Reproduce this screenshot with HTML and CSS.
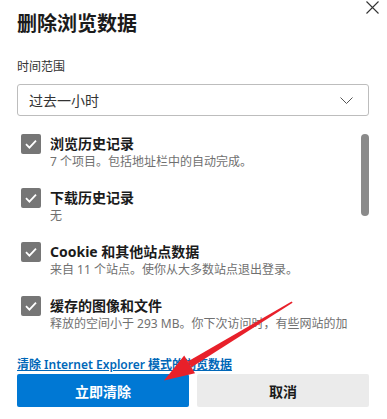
FILE: index.html
```html
<!DOCTYPE html>
<html lang="zh-CN">
<head>
<meta charset="utf-8">
<title>删除浏览数据</title>
<link rel="stylesheet" href="styles.css">
</head>
<body>
<div class="dialog">
  <div class="header">
    <h1 class="title">删除浏览数据</h1>
    <button class="close" aria-label="关闭">
      <svg width="13" height="13" viewBox="0 0 13 13"><path d="M0.5 0.5 L12.5 12.5 M12.5 0.5 L0.5 12.5" stroke="#333" stroke-width="1.1" fill="none"/></svg>
    </button>
  </div>
  <div class="label">时间范围</div>
  <div class="select">
    <span class="select-text">过去一小时</span>
    <svg class="chevron" width="13" height="7" viewBox="0 0 13 7"><path d="M0.5 0.5 L6.5 6.5 L12.5 0.5" stroke="#555" stroke-width="1" fill="none"/></svg>
  </div>
  <div class="list">
    <div class="items">
      <div class="item">
        <span class="check"><svg width="20" height="20" viewBox="0 0 20 20"><path d="M5 10.2 L8.4 13.6 L15 6.6" stroke="#fff" stroke-width="1.8" fill="none"/></svg></span>
        <div class="item-text">
          <div class="item-title">浏览历史记录</div>
          <div class="item-desc">7 个项目。包括地址栏中的自动完成。</div>
        </div>
      </div>
      <div class="item">
        <span class="check"><svg width="20" height="20" viewBox="0 0 20 20"><path d="M5 10.2 L8.4 13.6 L15 6.6" stroke="#fff" stroke-width="1.8" fill="none"/></svg></span>
        <div class="item-text">
          <div class="item-title">下载历史记录</div>
          <div class="item-desc">无</div>
        </div>
      </div>
      <div class="item">
        <span class="check"><svg width="20" height="20" viewBox="0 0 20 20"><path d="M5 10.2 L8.4 13.6 L15 6.6" stroke="#fff" stroke-width="1.8" fill="none"/></svg></span>
        <div class="item-text">
          <div class="item-title">Cookie 和其他站点数据</div>
          <div class="item-desc">来自 11 个站点。使你从大多数站点退出登录。</div>
        </div>
      </div>
      <div class="item">
        <span class="check"><svg width="20" height="20" viewBox="0 0 20 20"><path d="M5 10.2 L8.4 13.6 L15 6.6" stroke="#fff" stroke-width="1.8" fill="none"/></svg></span>
        <div class="item-text">
          <div class="item-title">缓存的图像和文件</div>
          <div class="item-desc">释放的空间小于 293 MB。你下次访问时，有些网站的加</div>
        </div>
      </div>
    </div>
    <div class="scrolltrack"><div class="thumb"></div></div>
  </div>
  <a class="ie-link" href="#">清除 Internet Explorer 模式的浏览数据</a>
  <div class="buttons">
    <button class="btn primary">立即清除</button>
    <button class="btn secondary">取消</button>
  </div>
</div>
<svg class="arrow" width="387" height="419" viewBox="0 0 387 419">
  <polygon points="291.6,301.4 292.6,302.8 191.4,367.3 187.8,361.5" fill="#e8202a"/>
  <polygon points="164,380.5 184.2,355.6 195,373.2" fill="#e8202a"/>
</svg>
</body>
</html>
```

FILE: styles.css
```css
* { box-sizing: border-box; }
html, body {
  margin: 0;
  padding: 0;
  background: #fff;
}
body {
  width: 387px;
  height: 419px;
  overflow: hidden;
  position: relative;
  font-family: "Segoe UI", "Noto Sans", "Noto Sans CJK SC", sans-serif;
  color: #1b1b1b;
}
.dialog {
  padding: 0 18px 0 17px;
}
.header {
  display: flex;
  justify-content: space-between;
  align-items: flex-start;
}
.title {
  margin: 10px 0 0;
  font-size: 20px;
  line-height: 28px;
  font-weight: 700;
  color: #1b1b1b;
}
.close {
  margin: 1px -10px 0 0;
  padding: 0;
  border: 0;
  background: none;
  width: 13px;
  height: 13px;
  display: block;
}
.close svg { display: block; }
.label {
  margin-top: 21px;
  font-size: 12px;
  line-height: 16px;
  color: #333;
}
.select {
  margin-top: 9px;
  height: 32px;
  border: 1px solid #bdbdbd;
  border-radius: 3px;
  display: flex;
  align-items: center;
  justify-content: space-between;
  padding: 0 15px 0 11px;
}
.select-text {
  font-size: 14px;
  color: #333;
}
.chevron { display: block; }
.list {
  margin-top: 18px;
  height: 218px;
  display: flex;
  gap: 9px;
}
.items {
  flex: 1;
  min-width: 0;
  overflow: hidden;
}
.item {
  display: flex;
  gap: 9px;
  padding-left: 4px;
  margin-bottom: 18px;
}
.check {
  flex: none;
  width: 20px;
  height: 20px;
  background: #767676;
  border-radius: 2px;
  display: block;
}
.check svg { display: block; }
.item-text {
  min-width: 0;
  overflow: hidden;
}
.item-title {
  font-size: 14px;
  line-height: 20px;
  font-weight: 700;
  color: #1b1b1b;
  white-space: nowrap;
}
.item-desc {
  font-size: 12px;
  line-height: 16px;
  color: #707070;
  white-space: nowrap;
}
.scrolltrack {
  flex: none;
  width: 8px;
}
.thumb {
  height: 82px;
  background: #8a8a8a;
  border-radius: 4px;
}
.ie-link {
  display: inline-block;
  font-size: 12px;
  line-height: 17px;
  font-weight: 600;
  color: #0067b8;
  text-decoration: underline;
}
.buttons {
  display: flex;
  gap: 8px;
}
.btn {
  flex: 1;
  height: 33px;
  border: 0;
  border-radius: 2px;
  font-family: inherit;
  font-size: 14px;
  font-weight: 700;
  padding: 0;
}
.primary {
  background: #0078d4;
  color: #fff;
}
.secondary {
  background: #ebebeb;
  color: #1b1b1b;
}
.arrow {
  position: absolute;
  left: 0;
  top: 0;
  pointer-events: none;
}
```
